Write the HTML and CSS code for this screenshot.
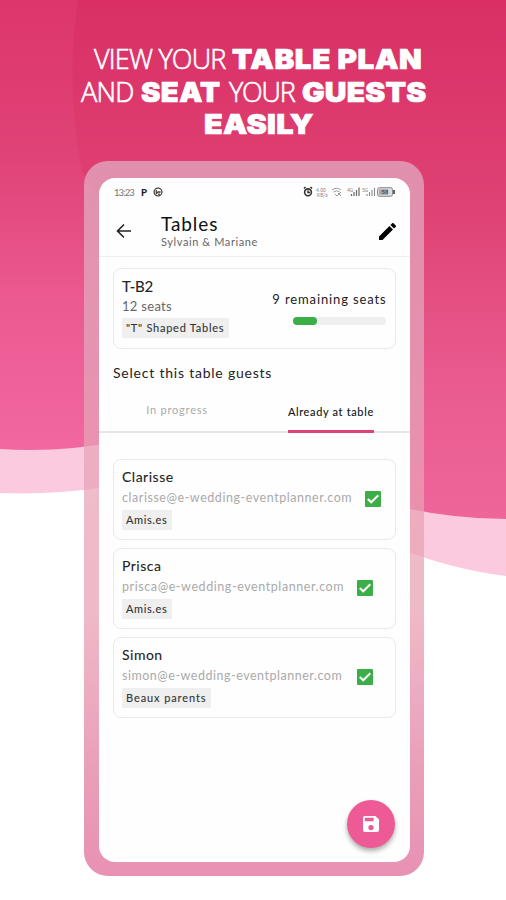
FILE: index.html
```html
<!DOCTYPE html>
<html lang="en">
<head>
<meta charset="utf-8">
<title>Table plan</title>
<link rel="stylesheet" href="styles.css">
</head>
<body>
<main class="poster">
  <svg class="backdrop" viewBox="0 0 506 900" aria-hidden="true">
    <defs>
      <linearGradient id="left" x1="0" y1="0" x2="0" y2="450" gradientUnits="userSpaceOnUse">
        <stop offset="0" stop-color="#dd366c"/><stop offset=".35" stop-color="#e04377"/><stop offset=".68" stop-color="#eb5b92"/><stop offset="1" stop-color="#f2679f"/>
      </linearGradient>
      <linearGradient id="right" x1="0" y1="0" x2="0" y2="519" gradientUnits="userSpaceOnUse">
        <stop offset="0" stop-color="#d92f65"/><stop offset=".4" stop-color="#df4274"/><stop offset=".75" stop-color="#ea5c90"/><stop offset="1" stop-color="#ee659a"/>
      </linearGradient>
    </defs>
    <path fill="#fccade" d="M0 440H100V488Q50 495 0 493Z"/>
    <path fill="#fccade" d="M400 480H506V576Q455 570 400 549Z"/>
    <path fill="url(#left)" d="M0 0H120V441Q60 453 0 449Z"/>
    <path fill="url(#right)" d="M78 0Q65 85 82 172L250 400L400 507Q455 519 506 519V0Z"/>
  </svg>

  <h1 class="headline">
    <span class="line"><span class="thin t1">VIEW YOUR</span><b class="b1">TABLE PLAN</b></span>
    <span class="line"><span class="thin t2">AND</span><b class="b2">SEAT</b><span class="thin t3">YOUR</span><b class="b3">GUESTS</b></span>
    <span class="line"><b class="b4">EASILY</b></span>
  </h1>

  <section class="phone">
    <div class="screen">
      <div class="status">
        <span class="clock">13:23</span><span class="parking">P</span>
        <svg class="dial" viewBox="0 0 10 10"><circle cx="5" cy="5" r="3.9"/><path d="M3.300 3V6.500L5 5H7.500M5 7.200H7"/></svg>
        <svg class="indicators" viewBox="0 0 93 12">
          <g fill="none" stroke="#333" stroke-width="1.6"><circle cx="5" cy="6.3" r="3.4"/><path d="M1 2.5L2.5 1M7.5 1L9 2.5M5 4.5V6.5H7"/></g>
          <g class="micro"><text x="13" y="5.5">4.00</text><text x="14" y="10.5">KB/s</text><text x="44" y="5.5">4G</text><text x="59" y="5.5">5G</text></g>
          <g fill="none" stroke="#999" stroke-width="1"><path d="M29 4Q33.500 .5 38 4M30.500 6Q33.500 3.500 36.500 6M32 8L34 10L38 6M35 7L38 10"/></g>
          <path fill="none" stroke="#666" stroke-width="1.2" d="M48.500 10V8M51 10V6M53.500 10V4M56 10V1.500"/>
          <path fill="none" stroke="#888" stroke-width="1.1" d="M64 10V8M66.500 10V6M69 10V4M71.500 10V2"/>
          <rect x="74.500" y="1.700" width="15" height="8.600" rx="2" fill="#ddd" stroke="#888" stroke-width="1"/><rect x="76" y="3.200" width="9" height="5.600" fill="#aaa"/><path d="M91 4V8" stroke="#333" stroke-width="1.500"/>
          <text class="charge" x="78.500" y="8.300">58</text>
        </svg>
      </div>

      <header class="appbar">
        <svg class="back" viewBox="0 0 16 16"><path d="M15 8H2M8 1.500L1.500 8L8 14.500"/></svg>
        <div class="titles"><div class="title">Tables</div><div class="subtitle">Sylvain &amp; Mariane</div></div>
        <svg class="edit" viewBox="3 3 18 18"><path d="M3 17.250V21h3.750L17.810 9.940l-3.750-3.750L3 17.250zM20.710 7.040a1 1 0 0 0 0-1.410l-2.340-2.340a1 1 0 0 0-1.410 0l-1.830 1.830 3.750 3.750 1.830-1.830z"/></svg>
      </header>

      <article class="card table-card">
        <div>
          <div class="name table-name">T-B2</div>
          <div class="seats">12 seats</div>
          <span class="chip shape">"T" Shaped Tables</span>
        </div>
        <div class="capacity">
          <div class="remaining">9 remaining seats</div>
          <div class="bar"><div class="fill"></div></div>
        </div>
      </article>

      <h2 class="section">Select this table guests</h2>
      <nav class="tabs">
        <span class="tab"><span class="idle">In progress</span></span>
        <span class="tab"><span class="active">Already at table</span></span>
      </nav>

      <div class="guests">
        <article class="card guest">
          <div><div class="name n1">Clarisse</div><div class="email e1">clarisse@e-wedding-eventplanner.com</div><span class="chip c1">Amis.es</span></div>
          <svg class="check" viewBox="0 0 16 16"><rect width="16" height="16" rx="1"/><path d="M2.800 8L6.200 11.300L13.300 4.200"/></svg>
        </article>
        <article class="card guest">
          <div><div class="name n2">Prisca</div><div class="email e2">prisca@e-wedding-eventplanner.com</div><span class="chip c1">Amis.es</span></div>
          <svg class="check" viewBox="0 0 16 16"><rect width="16" height="16" rx="1"/><path d="M2.800 8L6.200 11.300L13.300 4.200"/></svg>
        </article>
        <article class="card guest">
          <div><div class="name n3">Simon</div><div class="email e3">simon@e-wedding-eventplanner.com</div><span class="chip c3">Beaux parents</span></div>
          <svg class="check" viewBox="0 0 16 16"><rect width="16" height="16" rx="1"/><path d="M2.800 8L6.200 11.300L13.300 4.200"/></svg>
        </article>
      </div>

      <div class="fab"><svg viewBox="3 3 18 18"><path fill-rule="evenodd" d="M17 3H5a2 2 0 0 0-2 2v14a2 2 0 0 0 2 2h14a2 2 0 0 0 2-2V7l-4-4zm-5 16a3 3 0 1 1 0-6 3 3 0 0 1 0 6zm3-10H5V5h10v4z"/></svg></div>
    </div>
  </section>
</main>
</body>
</html>
```
FILE: styles.css
```css
* { box-sizing: border-box; }
body { margin: 0; background: #fff; font-family: Lato, "Liberation Sans", sans-serif; color: #222; }
.poster { position: relative; width: 506px; height: 900px; overflow: hidden; padding-top: 42px; }
.backdrop { position: absolute; inset: 0; width: 506px; height: 900px; }
.headline { position: relative; margin: 0; height: 119px; color: #fff; font-size: 27px; font-weight: 400; }
.line { display: flex; height: 33px; line-height: 33px; align-items: baseline; white-space: nowrap; }
.line:nth-child(1) { padding-left: 94px; }
.line:nth-child(2) { padding-left: 81px; }
.line:nth-child(3) { padding-left: 204px; }
.thin { font-family: "Open Sans", "Noto Sans", sans-serif; font-weight: 300; flex: none; -webkit-text-stroke: .6px #fff; }
.line b { font-family: Inter, Roboto, sans-serif; font-weight: 900; flex: none; transform-origin: 0 50%; -webkit-text-stroke: .7px #fff; }
.t1 { width: 138px; letter-spacing: -.8px; }
.b1 { width: 190px; letter-spacing: .6px; transform: scaleX(1.095); }
.t2 { width: 60px; letter-spacing: -.7px; }
.b2 { width: 88px; letter-spacing: .4px; transform: scaleX(1.08); }
.t3 { width: 73px; letter-spacing: -1.2px; }
.b3 { letter-spacing: .2px; transform: scaleX(1.11); }
.b4 { letter-spacing: .2px; transform: scaleX(1.13); }

.phone { position: relative; width: 340px; height: 715px; margin-left: 84px; padding: 17px 14.500px 14px 15px; border-radius: 24px; background: linear-gradient(rgb(226 175 196 / .72) 0, rgb(226 168 188 / .72) 25%, rgb(233 161 180 / .72) 50%, rgb(233 159 178 / .72) 63%, rgb(225 122 157 / .72) 85%, rgb(223 103 150 / .72)); }
.screen { position: relative; height: 684px; border-radius: 16px; background: #fefefe; }
.status { display: flex; align-items: center; height: 28px; padding: 0 14px 0 15px; }
.clock { width: 27px; font-size: 9.500px; color: #777; letter-spacing: -.9px; }
.parking { width: 12px; font-size: 9.500px; font-weight: 900; }
.dial { width: 10px; height: 10px; fill: none; stroke: #444; stroke-width: 1.300; }
.indicators { width: 93px; height: 12px; margin-left: auto; }
.micro text { font: 5px Roboto, sans-serif; fill: #888; }
.charge { font: 700 6px Roboto, sans-serif; fill: #555; }

.appbar { display: flex; height: 51px; padding: 0 14px 0 17px; border-bottom: 1.500px solid #efefef; }
.back { width: 16px; height: 16px; margin-top: 17px; fill: none; stroke: #222; stroke-width: 1.600; }
.titles { margin-left: 29px; padding-top: 6px; white-space: nowrap; }
.title { height: 24px; line-height: 24px; font-size: 19px; letter-spacing: .9px; color: #111; }
.subtitle { height: 12px; line-height: 12px; font-size: 11px; letter-spacing: .6px; color: #666; }
.edit { width: 17px; height: 17px; margin: 17px 0 0 auto; }

.card { display: flex; width: 283px; height: 81px; margin-left: 14px; padding: 8px 9px 8px 8px; border: 1.500px solid #eaeaea; border-radius: 8px; white-space: nowrap; }
.table-card { margin-top: 11px; justify-content: space-between; }
.name { height: 20px; line-height: 18px; font-size: 14px; color: #222; -webkit-text-stroke: .1px; }
.table-name { font-size: 15px; letter-spacing: -.2px; }
.seats { height: 20px; line-height: 18px; font-size: 13px; color: #666; letter-spacing: .3px; }
.chip { display: inline-block; height: 20px; line-height: 19px; padding: 0 4px; border-radius: 1px; background: #efefef; color: #333; font-size: 11px; vertical-align: top; -webkit-text-stroke: .1px; }
.shape { width: 107px; letter-spacing: .75px; margin-top: 1px; }
.capacity { display: flex; flex-direction: column; align-items: flex-end; padding-top: 12px; }
.remaining { height: 20px; line-height: 20px; font-size: 13px; letter-spacing: .87px; margin-right: -.5px; }
.bar { width: 93px; height: 8px; margin-top: 8px; border-radius: 4px; background: #efefef; }
.fill { width: 24px; height: 8px; border-radius: 4px; background: #3cae48; }

.section { height: 20px; margin: 14px 0 0 14px; line-height: 20px; font-size: 14px; font-weight: 400; letter-spacing: .78px; }
.tabs { display: grid; grid-template-columns: 1fr 1fr; height: 50px; border-bottom: 2px solid #e6e6e6; white-space: nowrap; }
.tab { display: flex; justify-content: center; font-size: 11px; }
.idle { width: 61px; padding-top: 20px; color: #aaa; letter-spacing: .8px; }
.active { width: 86px; height: 50px; padding-top: 22px; margin-right: 2px; border-bottom: 3px solid #dc4379; letter-spacing: .65px; color: #111; -webkit-text-stroke: .1px; }
.guests { display: grid; gap: 8px; margin-top: 26px; }
.guest .chip { margin-top: 2px; }
.email { height: 20px; line-height: 20px; font-size: 12.500px; color: #aaa; }
.check { width: 16px; height: 16px; margin: 23px 0 0 12px; fill: #3cae48; }
.check path { fill: none; stroke: #fff; stroke-width: 2; }
.e1 { width: 231px; letter-spacing: .55px; }
.e2, .e3 { width: 223px; }
.e2 { letter-spacing: .58px; }
.e3 { letter-spacing: .52px; }
.n1, .n2, .n3 { letter-spacing: .5px; }
.c1 { width: 50px; letter-spacing: .6px; }
.c3 { width: 89px; letter-spacing: .9px; }
.fab { position: absolute; right: 15px; bottom: 14px; display: grid; place-items: center; width: 48px; height: 48px; border-radius: 50%; background: #ee5a95; box-shadow: 0 3px 5px #0005; }
.fab svg { width: 16px; height: 16px; fill: #fff; }
```
